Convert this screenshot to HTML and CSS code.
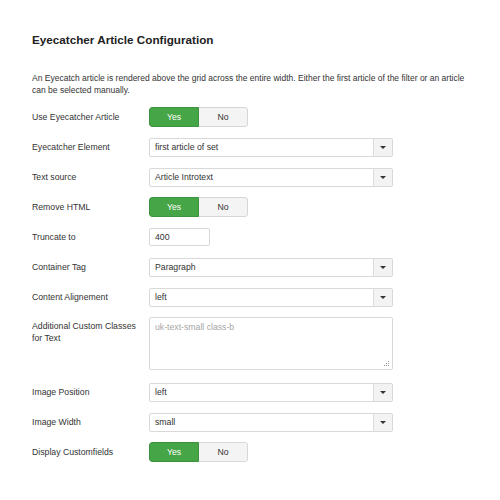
FILE: index.html
```html
<!DOCTYPE html>
<html>
<head>
<meta charset="utf-8">
<link rel="stylesheet" href="styles.css">
</head>
<body>
<div class="panel">
  <h1 class="title">Eyecatcher Article Configuration</h1>
  <p class="desc">An Eyecatch article is rendered above the grid across the entire width. Either the first article of the filter or an article can be selected manually.</p>
  <div class="form">
    <div class="row">
      <div class="label">Use Eyecatcher Article</div>
      <div class="toggle"><span class="opt yes">Yes</span><span class="opt no">No</span></div>
    </div>
    <div class="row">
      <div class="label">Eyecatcher Element</div>
      <div class="select"><span class="value">first article of set</span><span class="arrow"><i class="caret"></i></span></div>
    </div>
    <div class="row">
      <div class="label">Text source</div>
      <div class="select"><span class="value">Article Introtext</span><span class="arrow"><i class="caret"></i></span></div>
    </div>
    <div class="row">
      <div class="label">Remove HTML</div>
      <div class="toggle"><span class="opt yes">Yes</span><span class="opt no">No</span></div>
    </div>
    <div class="row">
      <div class="label">Truncate to</div>
      <div class="input">400</div>
    </div>
    <div class="row">
      <div class="label">Container Tag</div>
      <div class="select"><span class="value">Paragraph</span><span class="arrow"><i class="caret"></i></span></div>
    </div>
    <div class="row">
      <div class="label">Content Alignement</div>
      <div class="select"><span class="value">left</span><span class="arrow"><i class="caret"></i></span></div>
    </div>
    <div class="row row-top">
      <div class="label">Additional Custom Classes for Text</div>
      <div class="textarea"><span class="placeholder">uk-text-small class-b</span><svg class="grip" width="5" height="5" viewBox="0 0 5 5"><rect x="4" y="0" width="1" height="1" fill="#999"/><rect x="2" y="2" width="1" height="1" fill="#999"/><rect x="4" y="2" width="1" height="1" fill="#999"/><rect x="0" y="4" width="1" height="1" fill="#999"/><rect x="2" y="4" width="1" height="1" fill="#999"/><rect x="4" y="4" width="1" height="1" fill="#999"/></svg></div>
    </div>
    <div class="row">
      <div class="label">Image Position</div>
      <div class="select"><span class="value">left</span><span class="arrow"><i class="caret"></i></span></div>
    </div>
    <div class="row">
      <div class="label">Image Width</div>
      <div class="select"><span class="value">small</span><span class="arrow"><i class="caret"></i></span></div>
    </div>
    <div class="row">
      <div class="label">Display Customfields</div>
      <div class="toggle"><span class="opt yes">Yes</span><span class="opt no">No</span></div>
    </div>
  </div>
</div>
</body>
</html>
```

FILE: styles.css
```css
html, body {
  margin: 0;
  padding: 0;
  background: #fff;
}
body {
  font-family: "Liberation Sans", Arial, sans-serif;
  color: #333;
  font-size: 8.7px;
}
.panel {
  padding: 33px 0 0 32px;
}
.title {
  margin: 0;
  font-size: 11.7px;
  line-height: 14px;
  font-weight: bold;
  color: #222;
}
.desc {
  margin: 25px 0 0 0;
  width: 445px;
  line-height: 12px;
  font-size: 8.5px;
}
.form {
  display: flex;
  flex-direction: column;
  margin-top: 11px;
}
.row {
  display: flex;
  align-items: center;
  min-height: 20px;
  margin-bottom: 10px;
}
.row-top {
  align-items: flex-start;
  margin-bottom: 12px;
}
.label {
  width: 110px;
  margin-right: 7px;
  flex: none;
  line-height: 12px;
}
.row-top .label {
  padding-top: 3px;
}
.toggle {
  display: flex;
  width: 99px;
  height: 20px;
  border-radius: 3px;
  overflow: hidden;
  box-sizing: border-box;
}
.opt {
  flex: 1;
  display: flex;
  align-items: center;
  justify-content: center;
  font-size: 8.7px;
}
.yes {
  background: #46a546;
  color: #fff;
  border: 1px solid #3d933d;
  border-radius: 3px 0 0 3px;
}
.no {
  background: #f4f4f4;
  color: #333;
  border: 1px solid #d6d6d6;
  border-left: none;
  border-radius: 0 3px 3px 0;
}
.select {
  display: flex;
  width: 244px;
  height: 19px;
  box-sizing: border-box;
  border: 1px solid #d9d9d9;
  border-radius: 2px;
  background: #fff;
}
.value {
  flex: 1;
  display: flex;
  align-items: center;
  padding-left: 5px;
}
.arrow {
  width: 18px;
  flex: none;
  background: #f3f3f3;
  border-left: 1px solid #dcdcdc;
  display: flex;
  align-items: center;
  justify-content: center;
}
.caret {
  display: block;
  width: 0;
  height: 0;
  border-left: 3px solid transparent;
  border-right: 3px solid transparent;
  border-top: 3px solid #333;
}
.input {
  width: 61px;
  height: 18px;
  box-sizing: border-box;
  border: 1px solid #d9d9d9;
  border-radius: 2px;
  padding-left: 5px;
  display: flex;
  align-items: center;
}
.textarea {
  position: relative;
  width: 244px;
  height: 53px;
  box-sizing: border-box;
  border: 1px solid #d9d9d9;
  border-radius: 2px;
  padding: 3px 0 0 5px;
  line-height: 12px;
}
.placeholder {
  color: #a6a6a6;
}
.grip {
  position: absolute;
  right: 3px;
  bottom: 3px;
}
```
